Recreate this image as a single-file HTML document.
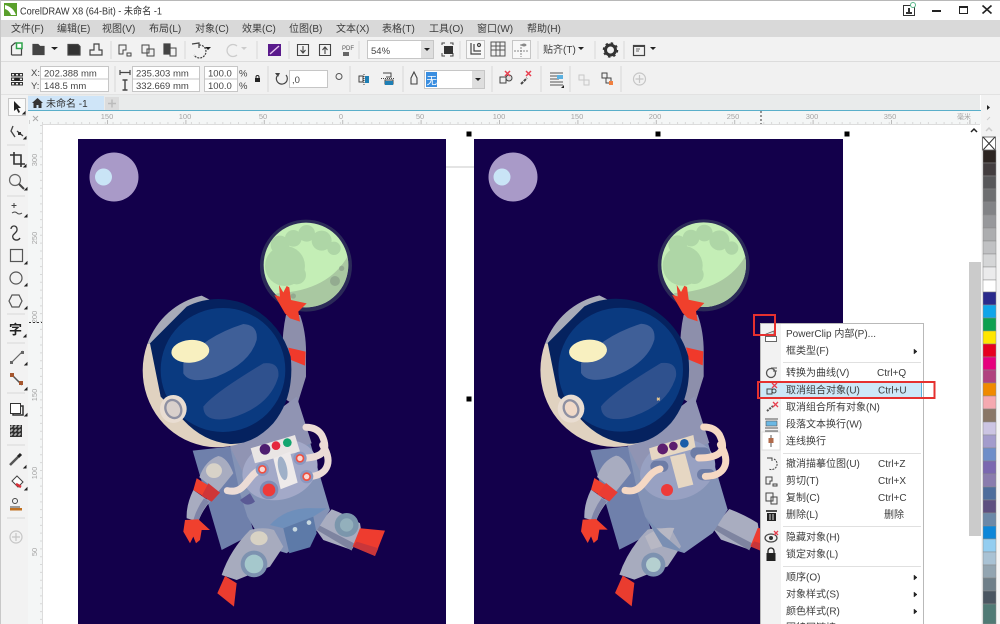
<!DOCTYPE html>
<html><head><meta charset="utf-8"><style>
html,body{margin:0;padding:0;background:#fff;width:1000px;height:624px;overflow:hidden}
svg{display:block;font-family:"Liberation Sans","Noto Sans CJK SC",sans-serif;filter:blur(.35px)}
.m{font-size:10px;fill:#3c3c3c}
.r{font-size:7.5px;fill:#a4a4a4}
.f{font-size:9.5px;fill:#444}
.box{fill:#fff;stroke:#c6c6c6;stroke-width:1}
.ic{fill:none;stroke:#444;stroke-width:1.2}
.sep{stroke:#d8d8d8;stroke-width:1}
</style></head><body>
<svg width="1000" height="624" viewBox="0 0 1000 624" xmlns="http://www.w3.org/2000/svg">
<defs>
<clipPath id="mc"><circle cx="528" cy="195" r="127"/></clipPath>
<g id="base">
 <circle cx="528" cy="197" r="138" fill="#2b2a58"/>
 <circle cx="528" cy="195" r="127" fill="#c4eeb6"/>
 <g clip-path="url(#mc)">
  <path d="M658,160 Q600,272 440,280 L400,340 L670,340Z" fill="#a9c8a1"/>
  <g fill="#aed6a6"><circle cx="465" cy="198" r="60"/><circle cx="450" cy="135" r="28"/><circle cx="490" cy="115" r="25"/><circle cx="530" cy="100" r="25"/><circle cx="575" cy="122" r="30"/><circle cx="612" cy="145" r="20"/><circle cx="500" cy="225" r="28"/></g>
 </g>
 <path d="M468,345 L510,345 Q530,400 528,470 L528,530 L500,620 L470,600 Q445,450 468,345Z" fill="#8d8fab"/>
 <path d="M475,443 L527,455 L525,497 L483,480Z" fill="#f0392b"/>
 <path d="M433,285 L450,290 L447,255 L460,277 L470,258 L478,262 L483,300 L530,310 L505,335 L510,365 L480,355 L465,340Z" fill="#f0402c"/>
 <path d="M555,985 L605,928 Q650,945 690,970 L695,1000 L665,1050 L580,1020Z" fill="#a9adc0"/>
 <path d="M552,985 L665,1052 L672,1030 L560,972Z" fill="#7e84a0"/>
 <path d="M690,985 L765,992 L735,1068 L668,1040Z" fill="#ee3c2f"/>
 <path d="M668,1040 L735,1068 L745,1045 L680,1025Z" fill="#c9363a"/>
 <path d="M188,752 L300,740 L372,1000 L275,1050Z" fill="#6f80ab"/>
 <path d="M300,740 L500,590 L600,930 L555,1000 L470,1060 L405,1040 L352,950 L330,880Z" fill="#8493b6"/>
 <path d="M300,740 L500,590 L545,730 L380,790 L345,830Z" fill="#9094b3"/>
 <path d="M208,832 Q225,782 265,768 Q292,772 310,820 L265,875Z" fill="#a8acc0"/>
 <path d="M190,870 Q168,915 170,955 L205,965 Q215,935 240,905Z" fill="#a8acc0"/>
 <path d="M238,905 Q213,935 205,965 L190,960 Q200,925 222,895Z" fill="#7f85a8"/>
 <path d="M200,835 L270,878 L245,905 L190,870Z" fill="#f0402e"/>
 <path d="M165,960 L205,958 L240,990 L215,990 L210,1020 L198,1030 L190,1010 L180,1030 L160,995Z" fill="#f0402e"/>
 <path d="M360,990 Q400,980 432,990 L460,1040 L420,1100 L320,1140 L275,1125 Q300,1050 360,990Z" fill="#a7abbe"/>
 <path d="M285,1128 L320,1150 L312,1220 L262,1180Z" fill="#ea3c2f"/>
 <path d="M52,432 A224 230 0 0 0 430,664 L300,400Z" fill="#e0d2c0"/>
 <path d="M52,432 A224 230 0 0 1 215,287 L300,330 L60,432Z" fill="#a8abb8"/>
 <path d="M60,430 L170,320 Q250,280 340,310 Q450,360 482,470 Q495,590 430,670 Q370,735 300,732 Q220,725 160,660 L92,590Z" fill="#05225f"/>
 <ellipse cx="279" cy="510" rx="187" ry="186" fill="#0a3a80"/>
 <path d="M160,490 Q220,410 340,372 Q385,375 380,420 Q360,490 260,530 Q180,555 160,520Z" fill="#3f5f98"/>
 <path d="M220,620 Q250,580 400,490 Q450,485 445,530 Q420,620 300,655 Q220,670 220,620Z" fill="#2f518e"/>
 <ellipse cx="181" cy="454" rx="57" ry="34" fill="#f8f0c0" transform="rotate(-5 181 454)"/>
 <ellipse cx="130" cy="627" rx="40" ry="42" fill="#e9ddd2"/>
</g>
</defs>

<!-- canvas -->
<rect width="1000" height="624" fill="#fff"/>
<line x1="446" y1="167" x2="474" y2="167" stroke="#c8c8c8"/>
<rect x="78" y="139" width="368" height="485" fill="#13004b"/>
<rect x="474" y="139" width="369" height="485" fill="#13004b"/>
<circle cx="114" cy="177" r="24.5" fill="#a99ac8"/><circle cx="103.5" cy="177" r="8.5" fill="#c9e4f6"/>
<circle cx="513" cy="177" r="24.5" fill="#a99ac8"/><circle cx="502" cy="177" r="8.5" fill="#c9e4f6"/>

<!-- left astronaut -->
<g transform="translate(130,200) scale(.3333)">
 <use href="#base"/>
 <g fill="#8aa08a" opacity=".7"><circle cx="615" cy="243" r="15"/><circle cx="635" cy="205" r="8"/><circle cx="490" cy="288" r="8"/></g>
 <ellipse cx="130" cy="627" rx="23" ry="28" fill="#d9d0cc" stroke="#8e90a2" stroke-width="7" transform="rotate(-25 130 627)"/>
 <ellipse cx="450" cy="810" rx="115" ry="88" fill="#a3a9c8" transform="rotate(-18 450 810)"/>
 <path d="M362,745 L495,705 L510,755 L375,790Z" fill="#e9e5e4"/>
 <path d="M430,775 L480,755 L503,848 L452,868Z" fill="#eeeaea"/>
 <ellipse cx="458" cy="805" rx="13" ry="36" fill="#9fb0c8" transform="rotate(-12 458 805)"/>
 <circle cx="405" cy="748" r="16" fill="#4d1d70"/><circle cx="438" cy="737" r="13" fill="#e5263d"/><circle cx="472" cy="728" r="13" fill="#12a56f"/>
 <circle cx="417" cy="870" r="28" fill="#7f8cb5"/><circle cx="417" cy="870" r="19" fill="#ee3a39"/>
 <path d="M330,900 Q350,925 375,905 L360,880Z" fill="#5a5a95"/>
 <g fill="none" stroke="#ecdcd6" stroke-width="21" stroke-linecap="round">
  <path d="M397,808 C350,820 350,885 292,872"/>
  <path d="M510,775 C575,775 600,755 575,705 Q560,682 528,682"/>
  <path d="M530,830 C590,830 612,790 578,735"/>
 </g>
 <g><circle cx="397" cy="808" r="20" fill="#8b98c0"/><circle cx="397" cy="808" r="13" fill="#f04f3f"/><circle cx="397" cy="808" r="8" fill="#f9d7d3"/>
 <circle cx="510" cy="775" r="20" fill="#8b98c0"/><circle cx="510" cy="775" r="13" fill="#f04f3f"/><circle cx="510" cy="775" r="8" fill="#f9d7d3"/>
 <circle cx="530" cy="830" r="20" fill="#8b98c0"/><circle cx="530" cy="830" r="13" fill="#f04f3f"/><circle cx="530" cy="830" r="8" fill="#f9d7d3"/></g>
 <ellipse cx="252" cy="812" rx="24" ry="22" fill="#d8d2c8"/>
 <path d="M235,850 L270,878 L245,905 L215,888Z" fill="#cf3638"/>
 <ellipse cx="387" cy="1015" rx="26" ry="21" fill="#d8d2c4"/>
 <circle cx="372" cy="1092" r="40" fill="#7d92b0"/><circle cx="372" cy="1092" r="28" fill="#a5c8cc"/>
 <circle cx="650" cy="975" r="36" fill="#7b96ac"/><circle cx="650" cy="975" r="20" fill="#93b0bc"/>
 <path d="M420,975 Q470,920 555,925 L590,925 L550,950 L460,985Z" fill="#6e8fbb"/>
 <path d="M460,985 L550,950 L560,1000 L540,1042 L478,1060Z" fill="#5d7aa8"/>
 <circle cx="495" cy="988" r="7" fill="#c8d8e0"/><circle cx="537" cy="968" r="7" fill="#c8d8e0"/>
</g>

<!-- right astronaut -->
<g transform="translate(527.7,199.7) scale(.3333)">
 <use href="#base"/>
 <ellipse cx="130" cy="627" rx="21" ry="26" fill="#f0d9c8" stroke="#8e90a2" stroke-width="7" transform="rotate(-25 130 627)"/>
 <ellipse cx="450" cy="810" rx="115" ry="88" fill="#98a1c2" transform="rotate(-18 450 810)"/>
 <path d="M364,746 L497,706 L504,746 L372,782Z" fill="#e6d7c3"/>
 <path d="M427,771 L472,761 L497,855 L452,866Z" fill="#e6d7c3"/>
 <circle cx="405" cy="748" r="16" fill="#5c1e6f"/><circle cx="437" cy="739" r="13" fill="#5c1e6f"/><circle cx="470" cy="731" r="13" fill="#1a5da8"/>
 <circle cx="418" cy="871" r="18" fill="#ee3a39"/>
 <g fill="none" stroke="#6d7ca6" stroke-width="34" stroke-linecap="round"><path d="M385,800 h20"/><path d="M505,760 h25"/><path d="M525,825 h20"/></g>
 <g fill="none" stroke="#f5d8c4" stroke-width="21" stroke-linecap="round">
  <path d="M397,808 C350,820 350,885 292,872"/>
  <path d="M513,775 C575,775 600,755 575,705 Q560,682 528,682"/>
  <path d="M533,830 C590,830 612,790 578,735"/>
 </g>
 <path d="M235,850 L270,878 L245,905 L210,885Z" fill="#ea3c33"/>
 <circle cx="377" cy="1095" r="36" fill="#7d92b0"/><circle cx="377" cy="1095" r="22" fill="#b5d0d0"/>
 <path d="M352,1010 Q395,980 440,985 L420,1035 L370,1050Z" fill="#b8b8c4"/>
 <path d="M352,950 L400,1000 L470,1060 L405,1040Z" fill="#7a8fb3"/>
 <path d="M388,594 l8,8 m0,-8 l-8,8" stroke="#e8c890" stroke-width="4"/>
</g>

<!-- selection handles -->
<g fill="#000"><rect x="466.500" y="131.500" width="5" height="5"/><rect x="655.500" y="131.500" width="5" height="5"/><rect x="844.500" y="131.500" width="5" height="5"/><rect x="466.500" y="396.500" width="5" height="5"/></g>

<!-- title bar -->
<rect width="1000" height="20" fill="#fff"/>
<rect width="1000" height="1" fill="#b8b8b8"/>
<rect x="4" y="3" width="13" height="13" fill="#5aa02c"/>
<path d="M5,5 Q13,7 16,15 L11,15 Q9,10 5,9Z" fill="#fff"/>
<text x="20" y="14.500" font-size="10" fill="#333" textLength="142" lengthAdjust="spacingAndGlyphs">CorelDRAW X8 (64-Bit) - 未命名 -1</text>
<rect x="903.500" y="5.500" width="11" height="10" fill="#fff" stroke="#333"/>
<path d="M906,14 h6 v-2 h-2 v-4 h-2 v4 h-2z" fill="#333"/>
<circle cx="913" cy="5" r="2.500" fill="#fff" stroke="#59b78a"/>
<rect x="932" y="10" width="9" height="2" fill="#222"/>
<rect x="959.500" y="6.500" width="8" height="7" fill="none" stroke="#222"/><rect x="959" y="6" width="9" height="2" fill="#222"/>
<path d="M982.500,5.500 L991.500,13.500 M991.500,5.500 L982.500,13.500" stroke="#222" stroke-width="1.600"/>

<!-- menu bar -->
<rect y="20" width="1000" height="17" fill="#d9d9d9"/>
<g class="m">
<text x="11" y="32" class="m">文件(F)</text><text x="57" y="32" class="m">编辑(E)</text><text x="102" y="32" class="m">视图(V)</text><text x="149" y="32" class="m">布局(L)</text><text x="195" y="32" class="m">对象(C)</text><text x="242" y="32" class="m">效果(C)</text><text x="289" y="32" class="m">位图(B)</text><text x="336" y="32" class="m">文本(X)</text><text x="382" y="32" class="m">表格(T)</text><text x="429" y="32" class="m">工具(O)</text><text x="477" y="32" class="m">窗口(W)</text><text x="527" y="32" class="m">帮助(H)</text>
</g>

<!-- toolbars -->
<rect y="37" width="1000" height="24" fill="#f2f2f2"/>
<line x1="0" y1="61.500" x2="1000" y2="61.500" stroke="#dcdcdc"/>
<rect y="62" width="1000" height="33" fill="#f1f1f1"/>
<line x1="0" y1="94.500" x2="1000" y2="94.500" stroke="#e2e2e2"/>
<rect x="0" y="0" width="1" height="624" fill="#c8c8c8"/>

<g class="ic">
 <path d="M11.500,55 V46 L15,43 H17 M21.500,49 V55 H11.500"/>
 <path d="M33,54.500 V44.500 H38 L40,46.500 H44 V54.500Z" fill="#444"/>
 <path d="M68,44.500 H78 L80,46.500 V55 H68Z" fill="#333"/>
 <path d="M90,55 V50 H94 V44 H99 V50 H102 V55Z"/>
 <path d="M119,45 H126 V50 H123 V54 H119Z M127,53 H131 V56 H127Z" stroke-width="1"/>
 <path d="M142,45 H149 V53 H142Z M147,49 H154 V56 H147Z" stroke-width="1"/>
 <path d="M164,44 H170 V54 H164Z" fill="#444"/><path d="M170,48 H176 V56 H170Z" stroke-width="1"/>
 <path d="M199,45 A6.500 6.500 0 1 1 194,55" stroke-dasharray="2 1"/><path d="M192,44 L199,43 L199,48"/>
 <path d="M237,46 A6 6 0 1 0 237,55" stroke="#ccc"/>
 <path d="M297.500,44.500 H308.500 V55.500 H297.500Z M303,46 V52 M300.500,50 L303,53 L305.500,50" stroke-width="1.100"/>
 <path d="M319.500,44.500 H330.500 V55.500 H319.500Z M325,54 V48 M322.500,50 L325,47 L327.500,50" stroke-width="1.100"/>
 <path d="M442,45 V43 H445 M450,43 H453 V45 M453,53 V56 H450 M445,56 H442 V53" stroke-width="1"/>
</g>
<rect x="16.500" y="43" width="5.500" height="5.500" fill="#fff" stroke="#2ea34a" stroke-width="1.500"/>
<path d="M51,47 h7 l-3.500,3z M205,47 h6 l-3,3z M578,47 h6 l-3,3z M650,47 h6 l-3,3z" fill="#222"/>
<path d="M241,47 h6 l-3,3z" fill="#ccc"/>
<rect x="268" y="44" width="13" height="12" fill="#5a1a8c"/><path d="M270,54 L279,46" stroke="#e8c8f0" stroke-width="1.400"/>
<text x="342" y="50" font-size="6" fill="#555">PDF</text><rect x="343" y="52" width="6" height="4" fill="#666"/>
<rect x="367.500" y="40.500" width="66" height="18" class="box"/><rect x="421" y="41" width="12" height="17" fill="#dedede"/>
<text x="371" y="54" class="f" fill="#444">54%</text><path d="M424,48 h6 l-3,3z" fill="#222"/>
<rect x="444" y="46" width="9" height="8" fill="#333"/>
<rect x="466.500" y="40.500" width="18" height="18" fill="#f8f8f8" stroke="#c6c6c6"/>
<path d="M471,43 V54 H481 M474,44 V51 H481" class="ic" stroke-width=".9"/><circle cx="479" cy="45" r="1.500" class="ic" stroke-width=".7"/>
<path d="M491,42 h14 v14 h-14z M491,46 h14 M491,50 h14 M496,42 v14 M500,42 v14" stroke="#555" fill="none" stroke-width="1"/>
<rect x="512.500" y="40.500" width="18" height="18" fill="#f8f8f8" stroke="#c6c6c6"/>
<path d="M521,44 V57 M514,51 H529" stroke="#888" stroke-dasharray="2 1"/><ellipse cx="524" cy="45" rx="2.500" ry="1.500" fill="#888"/>
<text x="543" y="53" class="m">贴齐(T)</text>
<g transform="translate(610.500,50)"><circle r="5" fill="none" stroke="#333" stroke-width="3"/><circle r="7" fill="none" stroke="#333" stroke-width="1.500" stroke-dasharray="2.500 3"/></g>
<rect x="633.500" y="45.500" width="11" height="10" class="ic"/><rect x="633" y="45" width="12" height="2" fill="#444"/><path d="M636,49 h4 M636,51 h3" stroke="#666"/>
<g class="sep"><line x1="111" y1="41" x2="111" y2="59"/><line x1="185" y1="41" x2="185" y2="59"/><line x1="257" y1="41" x2="257" y2="59"/><line x1="289" y1="41" x2="289" y2="59"/><line x1="359" y1="41" x2="359" y2="59"/><line x1="460" y1="41" x2="460" y2="59"/><line x1="538" y1="41" x2="538" y2="59"/><line x1="595" y1="41" x2="595" y2="59"/><line x1="624" y1="41" x2="624" y2="59"/>
<line x1="115" y1="66" x2="115" y2="92"/><line x1="268" y1="66" x2="268" y2="92"/><line x1="350" y1="66" x2="350" y2="92"/><line x1="403" y1="66" x2="403" y2="92"/><line x1="492" y1="66" x2="492" y2="92"/><line x1="541" y1="66" x2="541" y2="92"/><line x1="570" y1="66" x2="570" y2="92"/><line x1="621" y1="66" x2="621" y2="92"/></g>

<!-- property bar -->
<g fill="none" stroke="#333" stroke-width="1"><rect x="11.500" y="73.500" width="3" height="2.500"/><rect x="15.500" y="73.500" width="3" height="2.500"/><rect x="19.500" y="73.500" width="3" height="2.500"/><rect x="11.500" y="78" width="3" height="2.500"/><rect x="19.500" y="78" width="3" height="2.500"/><rect x="11.500" y="82.500" width="3" height="2.500"/><rect x="15.500" y="82.500" width="3" height="2.500"/><rect x="19.500" y="82.500" width="3" height="2.500"/></g><rect x="15" y="77.500" width="4" height="3.500" fill="#222"/>
<text x="31" y="76" class="f">X:</text><text x="31" y="89" class="f">Y:</text>
<rect x="40.500" y="66.500" width="68" height="12.500" class="box"/><rect x="40.500" y="79" width="68" height="12.500" class="box"/>
<text x="44" y="76.500" class="f">202.388 mm</text><text x="44" y="89" class="f">148.5 mm</text>
<path d="M120,72.500 h10 M120,70 v5 M130,70 v5" stroke="#444" stroke-width="1.200"/>
<path d="M125,80 v10 M122.500,80 h5 M122.500,90 h5" stroke="#444" stroke-width="1.400"/>
<rect x="132.500" y="66.500" width="67" height="12.500" class="box"/><rect x="132.500" y="79" width="67" height="12.500" class="box"/>
<text x="136" y="76.500" class="f">235.303 mm</text><text x="136" y="89" class="f">332.669 mm</text>
<rect x="204.500" y="66.500" width="33" height="12.500" class="box"/><rect x="204.500" y="79" width="33" height="12.500" class="box"/>
<text x="208" y="76.500" class="f">100.0</text><text x="208" y="89" class="f">100.0</text>
<text x="239" y="76.500" class="f">%</text><text x="239" y="89" class="f">%</text>
<rect x="255" y="78" width="5" height="4" fill="#222"/><path d="M256,78 v-1 a1.500 1.500 0 0 1 3,0 v1" fill="none" stroke="#222"/>
<path d="M286,74 A5.500 5.500 0 1 1 277,75" fill="none" stroke="#444" stroke-width="1.200" transform="translate(0,1)"/><path d="M275,73 l3,4 l2,-4z" fill="#444"/>
<rect x="289.500" y="70.500" width="38" height="17" class="box"/><text x="292" y="83" class="f">,0</text>
<circle cx="339" cy="76.500" r="3" fill="none" stroke="#555"/>
<path d="M359,76 h4 v6 h-4z" fill="none" stroke="#444"/><path d="M365,76 h4 v7 h-4z" fill="#1e7fb5"/><path d="M364,74 v11" stroke="#444" stroke-dasharray="1 1"/>
<path d="M383,73 h8 v4 h-5 M385,80 h8 v4 h-8z" fill="none" stroke="#444"/><path d="M385,81 h8 v4 h-8z" fill="#1e7fb5"/><path d="M381,78.500 h14" stroke="#444" stroke-dasharray="1 1"/>
<path d="M414,72 l3,6 v6 h-6 v-6z" fill="none" stroke="#444" stroke-width="1.100"/>
<rect x="424.500" y="70.500" width="60" height="18" class="box"/><rect x="472" y="71" width="12" height="17" fill="#dedede"/>
<rect x="426" y="72" width="11" height="15" fill="#3a8ee0"/><text x="426.500" y="84" font-size="10.500" fill="#fff">无</text>
<path d="M475,78 h6 l-3,3z" fill="#222"/>
<g><rect x="500" y="77" width="6" height="6" fill="none" stroke="#444"/><circle cx="509" cy="78" r="3" fill="#ddd" stroke="#444"/><path d="M505,71 l5,5 m0,-5 l-5,5" stroke="#e84050" stroke-width="1.500"/>
<path d="M521,84 l6,-6" stroke="#444" stroke-width="2" stroke-dasharray="3 1"/><path d="M526,71 l5,5 m0,-5 l-5,5" stroke="#e84050" stroke-width="1.500"/></g>
<path d="M550,73 h13 M550,76 h9 M550,79 h9 M550,82 h13 M550,85 h13" stroke="#555"/><rect x="557" y="75" width="6" height="4" fill="#5ab0e0"/><path d="M561,88 l3,-3 v3z" fill="#222"/>
<path d="M579,75 h5 v5 h-5z M584,80 h5 v5 h-5z" fill="none" stroke="#c8c8c8"/>
<path d="M602,73 h5 v5 h-5z M606,78 h5 v5 h-5z" fill="none" stroke="#444"/><rect x="609" y="81" width="4" height="4" fill="#f08040"/>
<g stroke="#c6c6c6" fill="none" stroke-width="1.200"><circle cx="639.500" cy="79" r="6"/><path d="M639.500,75 v8 M635.500,79 h8"/></g>

<!-- tab bar -->
<rect x="28" y="95" width="952" height="15" fill="#e9ebeb"/>
<rect x="28" y="96" width="76" height="14" fill="#cfe5f8"/>
<rect x="105" y="97" width="14" height="13" fill="#dcdcdc"/><path d="M108,103.500 h8 M112,99.500 v8" stroke="#bbb" stroke-width="1.500"/>
<path d="M32,103 l5.500,-5 l5.500,5 h-1.500 v5 h-3 v-3 h-2 v3 h-3 v-5z" fill="#333"/>
<text x="46" y="107" font-size="10" fill="#333">未命名 -1</text>
<rect x="28" y="110" width="953" height="1" fill="#5aafca"/>
<rect x="981" y="95" width="19" height="42" fill="#f2f2f2"/>
<path d="M987,105 l3,2.500 l-3,2.500z" fill="#222"/>
<path d="M987,120 l3,-3" stroke="#ccc"/>
<path d="M986,131 l3,-3 l3,3" stroke="#ccc" fill="none" stroke-width="1.500"/>

<!-- rulers -->
<rect x="28" y="111" width="953" height="13" fill="#f4f6f6"/>
<rect x="28" y="111" width="14" height="513" fill="#f4f6f6"/>
<line x1="42" y1="124.500" x2="980" y2="124.500" stroke="#dcdcdc"/>
<line x1="42.500" y1="124" x2="42.500" y2="624" stroke="#dcdcdc"/>
<line x1="42" y1="123" x2="980" y2="123" stroke="#cfcfcf" stroke-width="1.500" stroke-dasharray="1 6.840"/>
<line x1="41" y1="125" x2="41" y2="624" stroke="#cfcfcf" stroke-width="1.500" stroke-dasharray="1 6.840"/>
<line x1="29" y1="122" x2="980" y2="122" stroke="#bbb" stroke-width="4" stroke-dasharray="1 77.400" stroke-dashoffset="-78"/>
<g class="r" text-anchor="middle">
<text x="107" y="119">150</text><text x="185" y="119">100</text><text x="263" y="119">50</text><text x="341" y="119">0</text><text x="420" y="119">50</text><text x="499" y="119">100</text><text x="577" y="119">150</text><text x="655" y="119">200</text><text x="733" y="119">250</text><text x="812" y="119">300</text><text x="890" y="119">350</text>
<text x="964" y="119" font-size="7">毫米</text>
<text transform="translate(37,160) rotate(-90)">300</text><text transform="translate(37,238) rotate(-90)">250</text><text transform="translate(37,317) rotate(-90)">200</text><text transform="translate(37,395) rotate(-90)">150</text><text transform="translate(37,473) rotate(-90)">100</text><text transform="translate(37,552) rotate(-90)">50</text>
</g>
<path d="M33,116 l5,5 m0,-5 l-5,5" stroke="#aaa"/>
<line x1="761" y1="111" x2="761" y2="124" stroke="#333" stroke-dasharray="2 2"/>
<line x1="29" y1="322.500" x2="42" y2="322.500" stroke="#333" stroke-dasharray="2 2"/>

<!-- toolbox -->
<rect x="1" y="95" width="27" height="529" fill="#f2f2f2"/>
<rect x="8.500" y="98.500" width="17" height="17" fill="#fafafa" stroke="#c8c8c8"/>
<path d="M14,101 l0,10 l2.500,-2 l2,4 l1.500,-1 l-2,-4 l3,0z" fill="#222"/>
<g class="sep"><line x1="7" y1="145" x2="25" y2="145"/><line x1="7" y1="196" x2="25" y2="196"/><line x1="7" y1="314" x2="25" y2="314"/><line x1="7" y1="343" x2="25" y2="343"/><line x1="7" y1="393" x2="25" y2="393"/><line x1="7" y1="445" x2="25" y2="445"/><line x1="7" y1="518" x2="25" y2="518"/></g>
<path d="M23,114 l2,-2 v2z M24,139 l2,-2 v2z M24,167 l2,-2 v2z M25,190 l2,-2 v2z M25,217 l2,-2 v2z M25,264 l2,-2 v2z M25,286 l2,-2 v2z M25,309 l2,-2 v2z M24,337 l2,-2 v2z M25,365 l2,-2 v2z M25,390 l2,-2 v2z M25,416 l2,-2 v2z M24,468 l2,-2 v2z M25,490 l2,-2 v2z" fill="#222" stroke="#222"/>
<path d="M13,126 l-2,5 l4,6 M17,131 l6,5" fill="none" stroke="#444" stroke-width="1.300"/><rect x="18" y="132" width="3" height="3" fill="#333"/>
<path d="M14,152 v12 h11 M10,155 h11 v12" fill="none" stroke="#333" stroke-width="1.600"/>
<circle cx="15" cy="180" r="5.500" fill="none" stroke="#666" stroke-width="1.200"/><path d="M19,184 l5,5" stroke="#444" stroke-width="2"/>
<path d="M14,203 v5 M11.500,205.500 h5" stroke="#444"/><path d="M12,213 q3,-2 5,0 t5,0" fill="none" stroke="#444"/>
<path d="M20,238 a4,4 0 0 1 -7,0 c-2,-4 5,-5 4,-9 a3,3 0 0 0 -6,0" fill="none" stroke="#333" stroke-width="1.300"/>
<rect x="10.500" y="249.500" width="12" height="12" fill="none" stroke="#555" stroke-width="1.200"/>
<circle cx="16" cy="278" r="6" fill="none" stroke="#555" stroke-width="1.200"/>
<path d="M12,295 h7 l3,6 l-3,6 h-7 l-3,-6z" fill="none" stroke="#555" stroke-width="1.200"/>
<text x="9" y="334" font-size="13" font-weight="bold" fill="#222">字</text>
<path d="M11,363 l12,-12" stroke="#666" stroke-width="1.200"/><rect x="10" y="361" width="3" height="3" fill="#666"/><rect x="21" y="351" width="3" height="3" fill="#666"/>
<path d="M12,375 l10,10" stroke="#555" stroke-width="1.500"/><rect x="10" y="373" width="4" height="4" fill="#a5562e"/><rect x="19" y="381" width="4" height="4" fill="#a5562e"/>
<rect x="10.500" y="403.500" width="10" height="10" fill="#fff" stroke="#333"/><path d="M21,406 h2 v9 h-10 v-1" fill="none" stroke="#333" stroke-width="1.500"/>
<rect x="10" y="425" width="12" height="12" fill="#333"/><path d="M10,427 h12 M10,431 h12 M10,435 h12 M12,425 v12 M16,425 v12 M20,425 v12" stroke="#ddd" stroke-dasharray="2 2"/>
<path d="M10,465 l8,-8" stroke="#555" stroke-width="2.500"/><path d="M18,457 l3,-3" stroke="#222" stroke-width="3"/>
<path d="M12,481 l5,-5 l6,6 l-5,5z" fill="#fff" stroke="#444"/><path d="M16,484 l5,3" stroke="#d8303a" stroke-width="2.500"/>
<circle cx="15" cy="501" r="2.500" fill="none" stroke="#444"/><path d="M10,507 h10" stroke="#444"/><rect x="10" y="508" width="12" height="2.500" fill="#c07020"/>
<g stroke="#c6c6c6" fill="none" stroke-width="1.200"><circle cx="16" cy="537" r="6"/><path d="M16,533 v8 M12,537 h8"/></g>

<!-- right strip -->
<rect x="981" y="137" width="19" height="487" fill="#f5f5f5"/>
<rect x="969" y="262" width="12" height="274" fill="#cbcbcb"/>
<path d="M971,132 l3,-3 l3,3" fill="none" stroke="#222" stroke-width="1.500"/>
<rect x="982.500" y="137" width="13" height="13" fill="#fff" stroke="#777"/><path d="M983,137 l12,13 m0,-13 l-12,13" stroke="#333"/>
<g stroke="#8a8a8a" stroke-width=".5">
<rect x="983" y="150" width="13" height="13" fill="#2d2522"/><rect x="983" y="163" width="13" height="13" fill="#433d3f"/><rect x="983" y="176" width="13" height="13" fill="#58585a"/><rect x="983" y="189" width="13" height="13" fill="#6d6e70"/><rect x="983" y="202" width="13" height="13" fill="#828386"/><rect x="983" y="215" width="13" height="13" fill="#97989b"/><rect x="983" y="228" width="13" height="13" fill="#acadaf"/><rect x="983" y="241" width="13" height="13" fill="#c0c1c3"/><rect x="983" y="254" width="13" height="13" fill="#d5d6d7"/><rect x="983" y="267" width="13" height="13" fill="#ebebec"/><rect x="983" y="280" width="13" height="12" fill="#ffffff"/>
<rect x="983" y="292" width="13" height="13" fill="#2a2a8c"/><rect x="983" y="305" width="13" height="13" fill="#0fa5e9"/><rect x="983" y="318" width="13" height="13" fill="#0da050"/><rect x="983" y="331" width="13" height="13" fill="#ffe600"/><rect x="983" y="344" width="13" height="13" fill="#e60020"/><rect x="983" y="357" width="13" height="13" fill="#e6007e"/><rect x="983" y="370" width="13" height="13" fill="#b0427f"/><rect x="983" y="383" width="13" height="13" fill="#f08a00"/><rect x="983" y="396" width="13" height="13" fill="#f5a9b0"/><rect x="983" y="409" width="13" height="13" fill="#8a7767"/><rect x="983" y="422" width="13" height="13" fill="#ccc5e3"/><rect x="983" y="435" width="13" height="13" fill="#a39ccc"/><rect x="983" y="448" width="13" height="13" fill="#6e8ec9"/><rect x="983" y="461" width="13" height="13" fill="#7b68b0"/><rect x="983" y="474" width="13" height="13" fill="#8a7cae"/><rect x="983" y="487" width="13" height="13" fill="#4e6d9c"/><rect x="983" y="500" width="13" height="13" fill="#5e5080"/><rect x="983" y="513" width="13" height="13" fill="#6b88a8"/><rect x="983" y="526" width="13" height="13" fill="#0c86d8"/><rect x="983" y="539" width="13" height="13" fill="#93cdf0"/><rect x="983" y="552" width="13" height="13" fill="#a9c2d4"/><rect x="983" y="565" width="13" height="13" fill="#93a5b1"/><rect x="983" y="578" width="13" height="13" fill="#6f7f89"/><rect x="983" y="591" width="13" height="13" fill="#4b5661"/><rect x="983" y="604" width="13" height="20" fill="#507a75"/>
</g>

<!-- context menu -->
<rect x="760.500" y="323.500" width="163" height="310" fill="#fff" stroke="#b9b9b9"/>
<rect x="761" y="324" width="20" height="300" fill="#f2f2f2"/>
<g stroke="#e0e0e0"><line x1="783" y1="362.500" x2="921" y2="362.500"/><line x1="783" y1="453.500" x2="921" y2="453.500"/><line x1="783" y1="526.500" x2="921" y2="526.500"/><line x1="783" y1="566.500" x2="921" y2="566.500"/></g>
<rect x="761" y="382" width="161" height="16" fill="#cde8f8"/><rect x="921" y="382" width="1" height="16" fill="#5ab0dc"/>
<rect x="762" y="432" width="18" height="18" fill="#fff" stroke="#dcdcdc"/>
<g font-size="10" fill="#3c3c3c">
<text x="786" y="337">PowerClip 内部(P)...</text><text x="786" y="354">框类型(F)</text>
<text x="786" y="376">转换为曲线(V)</text><text x="877" y="376">Ctrl+Q</text>
<text x="786" y="393.500">取消组合对象(U)</text><text x="878" y="393.500">Ctrl+U</text>
<text x="786" y="410.500">取消组合所有对象(N)</text>
<text x="786" y="427.500">段落文本换行(W)</text>
<text x="786" y="444.500">连线换行</text>
<text x="786" y="467">撤消描摹位图(U)</text><text x="878" y="467">Ctrl+Z</text>
<text x="786" y="484">剪切(T)</text><text x="878" y="484">Ctrl+X</text>
<text x="786" y="501">复制(C)</text><text x="878" y="501">Ctrl+C</text>
<text x="786" y="518">删除(L)</text><text x="884" y="518">删除</text>
<text x="786" y="540.500">隐藏对象(H)</text>
<text x="786" y="557.500">锁定对象(L)</text>
<text x="786" y="580.500">顺序(O)</text><text x="786" y="597.500">对象样式(S)</text><text x="786" y="614.500">颜色样式(R)</text>
<text x="786" y="631">因特网链接</text>
</g>
<path d="M914,349 l3,2.500 l-3,2.500z M914,575 l3,2.500 l-3,2.500z M914,592 l3,2.500 l-3,2.500z M914,609 l3,2.500 l-3,2.500z" fill="#222" stroke="#222" stroke-width=".5"/>
<!-- menu icons -->
<path d="M766,334 l8,-3 v3 l-8,3z" fill="#ddd" stroke="#666" stroke-width=".8"/><rect x="765.500" y="336.500" width="11" height="5" fill="#fff" stroke="#666"/>
<circle cx="771" cy="373" r="4.500" fill="none" stroke="#555" stroke-width="1.300"/><path d="M771,368 h6 M773,371 h4" stroke="#555"/>
<rect x="767" y="389" width="5" height="5" fill="none" stroke="#444"/><circle cx="774" cy="391" r="2" fill="none" stroke="#444"/><path d="M772,383 l5,5 m0,-5 l-5,5" stroke="#e84050" stroke-width="1.300"/>
<path d="M767,411 l6,-5" stroke="#555" stroke-width="2" stroke-dasharray="2 1"/><path d="M773,402 l5,5 m0,-5 l-5,5" stroke="#e84050" stroke-width="1.300"/>
<path d="M765,419 h13 M765,428 h13 M765,431 h13" stroke="#555"/><rect x="766" y="421" width="11" height="5" fill="#6ab8e4" stroke="#555" stroke-width=".6"/>
<path d="M771,435 v12" stroke="#555"/><rect x="768.500" y="438" width="5" height="5" fill="#b06a4a"/>
<path d="M774,459 a5.500 5.500 0 1 1 -5,10" fill="none" stroke="#444" stroke-dasharray="2 1"/><path d="M767,458 l5,0 l0,3" fill="none" stroke="#444"/>
<path d="M766,477 h6 v4 h-2 v3 h-4z M773,484 h4 v2 h-4z" fill="none" stroke="#444"/>
<path d="M766,493 h7 v8 h-7z M771,497 h6 v7 h-6z" fill="#f2f2f2" stroke="#444"/>
<path d="M766,511 h11" stroke="#222" stroke-width="1.600"/><path d="M767,513 h9 v8 h-9z" fill="#222"/><path d="M770,514 v6 M773,514 v6" stroke="#ddd"/>
<ellipse cx="771" cy="538" rx="6" ry="4" fill="none" stroke="#444" stroke-width="1.200"/><circle cx="771" cy="538" r="2" fill="#333"/><path d="M774,531 l4,4 m0,-4 l-4,4" stroke="#e84050" stroke-width="1.300"/>
<rect x="766.500" y="553" width="9" height="8" fill="#222"/><path d="M768,553 v-2 a3 3 0 0 1 6,0 v2" fill="none" stroke="#222" stroke-width="1.300"/>

<!-- red annotation boxes -->
<rect x="754" y="315" width="21" height="20" fill="none" stroke="#e5312f" stroke-width="2"/>
<rect x="758" y="382" width="176.500" height="16" fill="none" stroke="#e5312f" stroke-width="2"/>
</svg>
</body></html>
